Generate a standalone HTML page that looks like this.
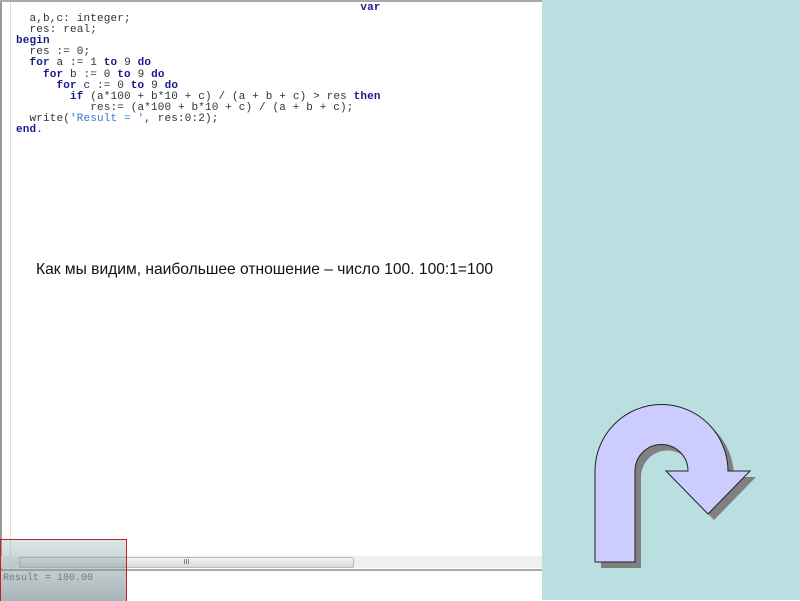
<!DOCTYPE html><html><head><meta charset="utf-8"><style>
body{margin:0;width:800px;height:600px;position:relative;overflow:hidden;background:#fff;font-family:"Liberation Sans",sans-serif}
.r{position:absolute;left:542px;top:0;width:258px;height:600px;background:#b9dfe1}
pre{position:absolute;left:16px;top:3px;margin:0;font:11px/11.1px "Liberation Mono",monospace;color:#333;letter-spacing:0.15px}
b{color:#1a1a8c;font-weight:bold}
.s{color:#3a78d8}
.res{position:absolute;left:3px;top:573px;font:10px/12px 'Liberation Mono',monospace;color:#666}
</style></head><body>
<div style="position:absolute;left:0;top:0;width:2px;height:571px;background:#999"></div>
<div style="position:absolute;left:10px;top:0;width:1px;height:560px;background:#ddd"></div>
<div style="position:absolute;left:0;top:0;width:542px;height:2px;background:#aaa"></div>
<pre>                                                   <b>var</b>
  a,b,c: integer;
  res: real;
<b>begin</b>
  res := 0;
  <b>for</b> a := 1 <b>to</b> 9 <b>do</b>
    <b>for</b> b := 0 <b>to</b> 9 <b>do</b>
      <b>for</b> c := 0 <b>to</b> 9 <b>do</b>
        <b>if</b> (a*100 + b*10 + c) / (a + b + c) &gt; res <b>then</b>
           res:= (a*100 + b*10 + c) / (a + b + c);
  write(<span class="s">'Result = '</span>, res:0:2);
<b>end</b>.</pre>
<div style="position:absolute;left:36px;top:261px;font-size:15.6px;color:#111;white-space:nowrap">Как мы видим, наибольшее отношение – число 100. 100:1=100</div>
<div style="position:absolute;left:0;top:556px;width:542px;height:12px;background:#f0f0f0"></div>
<div style="position:absolute;left:19px;top:557px;width:333px;height:9px;background:linear-gradient(#f4f4f4,#d8d8d8);border:1px solid #bbb;border-radius:2px;font-size:7px;text-align:center;line-height:9px;color:#555">III</div>
<div style="position:absolute;left:0;top:569px;width:542px;height:2px;background:#aaa"></div>
<div class="res">Result = 100.00</div>
<div style="position:absolute;left:0;top:539px;width:125px;height:61px;border:1px solid #c42020;border-bottom:none;background:linear-gradient(rgba(150,185,190,.35),rgba(110,130,135,.6))"></div>
<div class="r"></div>
<svg style="position:absolute;left:0;top:0" width="800" height="600">
<path transform="translate(6,6)" fill="#808080" d="M595 562 L595 471 A66.5 66.5 0 0 1 728 471 L750 471 L708 514 L666 471 L688 471 A26.5 26.5 0 0 0 635 471 L635 562 Z"/>
<path fill="#ccccff" stroke="#222" stroke-width="1" d="M595 562 L595 471 A66.5 66.5 0 0 1 728 471 L750 471 L708 514 L666 471 L688 471 A26.5 26.5 0 0 0 635 471 L635 562 Z"/>
</svg>
</body></html>
